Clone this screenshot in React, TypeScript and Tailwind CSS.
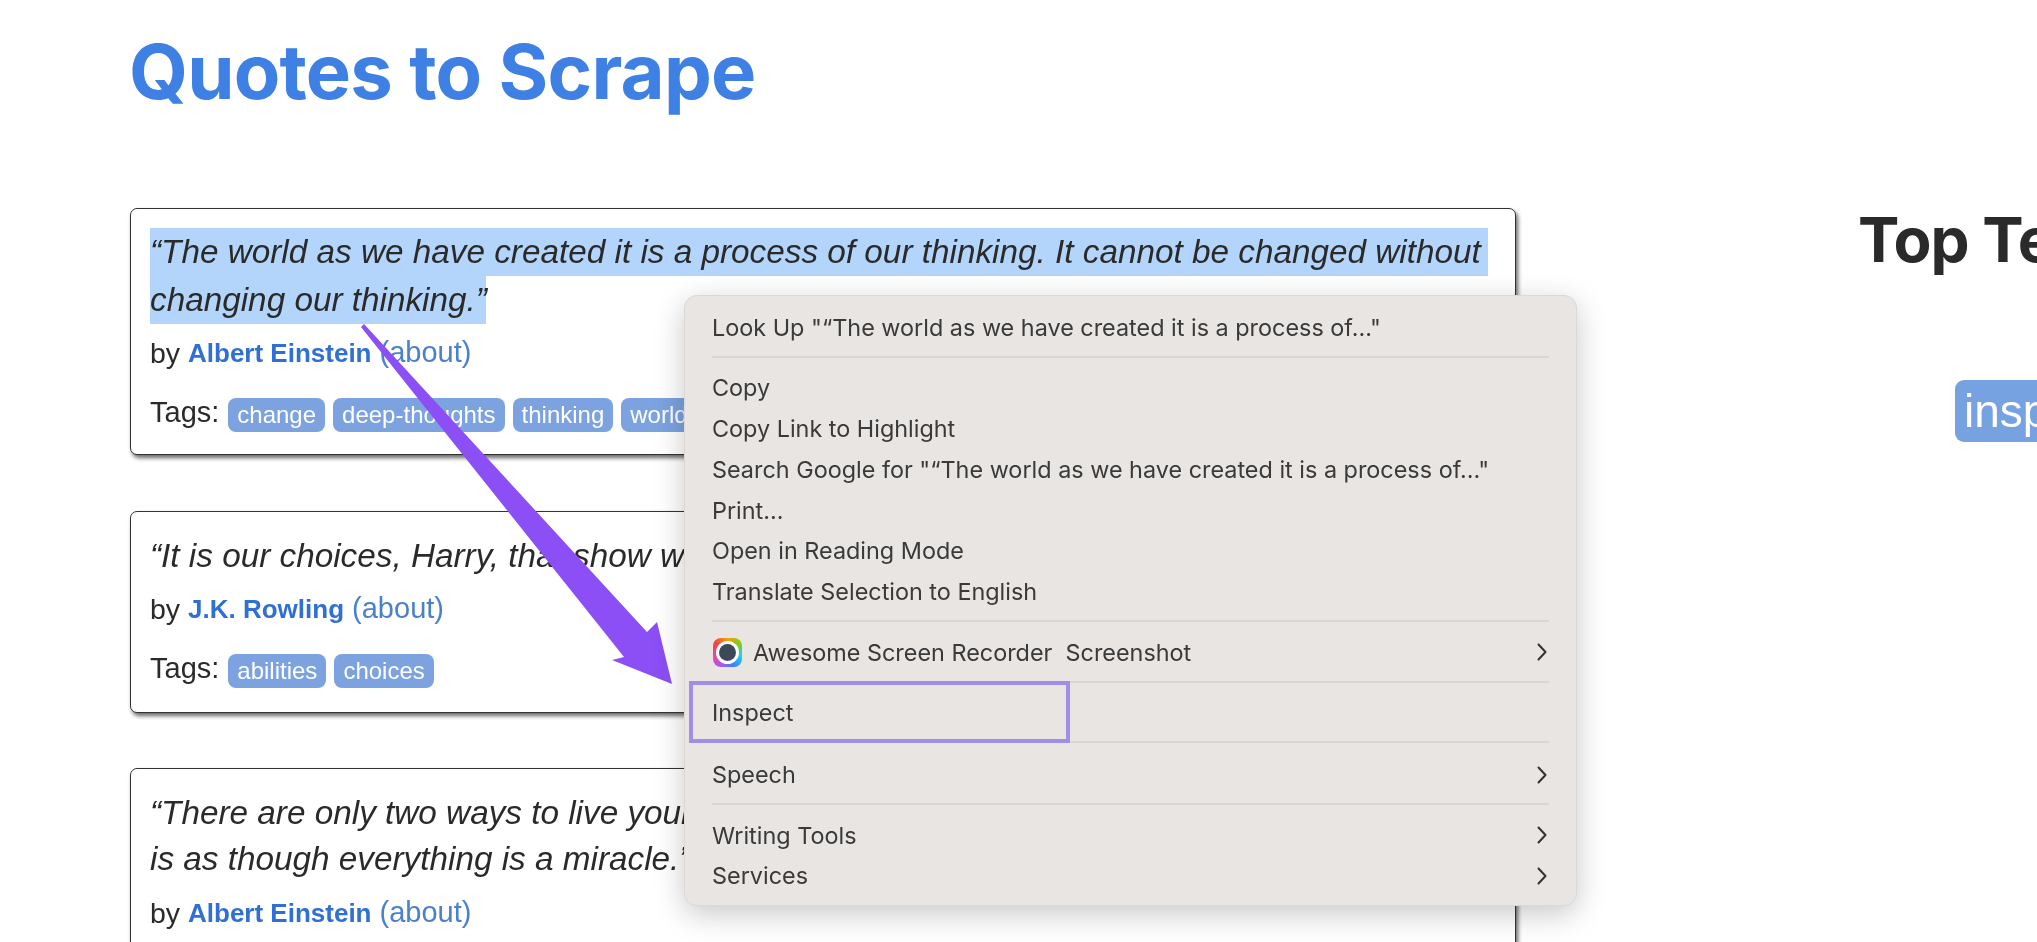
import React from "react";

function Tag({ t }: { t: string }) {
  return (
    <span className="inline-flex h-[34px] items-center rounded-[8px] bg-[#7ca3e0] px-[9px] text-[24px] leading-none text-white">
      {t}
    </span>
  );
}

function Byline({ name }: { name: string }) {
  return (
    <div className="flex h-[58px] items-center whitespace-pre text-[28.5px] text-[#2a2a2a]">
      <span>by </span>
      <span className="text-[26px] font-bold text-[#2f6fd6]">{name}</span>
      <span className="text-[29px] text-[#4a80cc]"> (about)</span>
    </div>
  );
}

function Tags({ tags }: { tags: string[] }) {
  return (
    <div className="mt-[3px] flex h-[58px] items-center text-[29px] text-[#2a2a2a]">
      <span className="mr-[9px] -translate-y-[1px]">Tags:</span>
      <div className="flex translate-y-[1px] gap-[8px]">
        {tags.map((t) => (
          <Tag key={t} t={t} />
        ))}
      </div>
    </div>
  );
}

function Card({ children, cls }: { children: React.ReactNode; cls: string }) {
  return (
    <div
      className={
        "rounded-[7px] border-[1.5px] border-[#333] bg-white px-[19px] shadow-[2px_3px_4px_rgba(0,0,0,0.6)] " + cls
      }
    >
      {children}
    </div>
  );
}

function Row({ children, chevron }: { children: React.ReactNode; chevron?: boolean }) {
  return (
    <div className="flex h-[40.7px] items-center justify-between whitespace-pre px-[27px]">
      <div className="flex items-center">{children}</div>
      {chevron && (
        <svg width="10" height="18" viewBox="0 0 10 18" fill="none" className="mr-[2px]">
          <path d="M1.5 1.5L8.5 9L1.5 16.5" stroke="#333" strokeWidth="2" strokeLinecap="round" strokeLinejoin="round" />
        </svg>
      )}
    </div>
  );
}

function Sep({ cls = "mb-[10px]" }: { cls?: string }) {
  return <div className={"mx-[27px] mt-[8px] h-[2px] bg-[#d9d6d4] " + cls} />;
}

export default function App() {
  return (
    <div className="relative flex h-[942px] w-[2037px] overflow-hidden bg-white font-['Liberation_Sans',sans-serif] blur-[0.6px]">
      <div className="ml-[130px] w-[1386px] shrink-0">
        <h1 className="-ml-[1px] h-[208px] pt-[21px] font-['Inter',sans-serif] text-[76px] font-bold leading-[100px] tracking-[-0.8px] text-[#3f80e4]">
          Quotes to Scrape
        </h1>

        <Card cls="mb-[56px] pt-[19px] pb-[11px]">
          <div className="text-[33.3px] italic leading-[48px] text-[#2a2a2a]">
            <div className="h-[48px] w-[1338px] whitespace-nowrap bg-[#b3d5fb]">
              “The world as we have created it is a process of our thinking. It cannot be changed without
            </div>
            <div className="h-[48px] w-[336px] whitespace-nowrap bg-[#b3d5fb]">changing our thinking.”</div>
          </div>
          <Byline name="Albert Einstein" />
          <Tags tags={["change", "deep-thoughts", "thinking", "world"]} />
        </Card>

        <Card cls="mb-[55px] pt-[20px] pb-[13px]">
          <div className="h-[48px] whitespace-nowrap text-[33.3px] italic leading-[48px] text-[#2a2a2a]">
            “It is our choices, Harry, that show what we truly are, far more than our abilities.”
          </div>
          <Byline name="J.K. Rowling" />
          <Tags tags={["abilities", "choices"]} />
        </Card>

        <Card cls="pt-[21px] pb-[14px]">
          <div className="mb-[2px] text-[33.3px] italic leading-[46px] text-[#2a2a2a]">
            <div className="whitespace-nowrap">“There are only two ways to live your life. One is as though nothing is a miracle. The other</div>
            <div className="whitespace-nowrap">is as though everything is a miracle.”</div>
          </div>
          <Byline name="Albert Einstein" />
        </Card>
      </div>

      <div className="ml-[343px] shrink-0 whitespace-nowrap">
        <h2 className="-ml-[1px] pt-[200px] font-['Inter',sans-serif] text-[62px] font-bold leading-[80px] tracking-[-1px] text-[#2a2a2a]">
          Top Ten tags
        </h2>
        <div className="ml-[96px] mt-[100px] inline-flex h-[62px] items-center rounded-[9px] bg-[#77a2e2] px-[9px] text-[46px] leading-none text-white">
          inspirational
        </div>
      </div>

      <svg className="absolute left-0 top-0" width="2037" height="942" viewBox="0 0 2037 942">
        <polygon points="364,324 647,632 657,622 672,684 612,660 624,657 361,327" fill="#8b4ff5" />
      </svg>

      <div className="absolute left-[684px] top-[295px] h-[611px] w-[893px] rounded-[13px] border border-[#dbd8d6] bg-[#e8e5e3] pb-[10px] pt-[11px] font-['Inter',sans-serif] text-[23.4px] text-[#3a3a3a] shadow-[0_8px_30px_rgba(0,0,0,0.22)]">
        <Row>Look Up "“The world as we have created it is a process of..."</Row>
        <Sep />
        <Row>Copy</Row>
        <Row>Copy Link to Highlight</Row>
        <Row>Search Google for "“The world as we have created it is a process of..."</Row>
        <Row>Print...</Row>
        <Row>Open in Reading Mode</Row>
        <Row>Translate Selection to English</Row>
        <Sep />
        <Row chevron>
          <span className="ml-[1px] mr-[11px] flex h-[29px] w-[29px] items-center justify-center rounded-[8px] bg-[conic-gradient(#f59e0b,#84cc16,#22d3ee,#3b82f6,#a855f7,#ec4899,#ef4444,#f59e0b)]">
            <span className="flex h-[23px] w-[23px] items-center justify-center rounded-full bg-white">
              <span className="h-[17px] w-[17px] rounded-full bg-[#3b4a5a]" />
            </span>
          </span>
          Awesome Screen Recorder  Screenshot
        </Row>
        <Sep />
        <Row>Inspect</Row>
        <Sep cls="mb-[11px]" />
        <Row chevron>Speech</Row>
        <Sep />
        <Row chevron>Writing Tools</Row>
        <Row chevron>Services</Row>
        <div className="absolute left-[4px] top-[385px] h-[62px] w-[381px] border-[4px] border-[#a08fe6]" />
      </div>
    </div>
  );
}
